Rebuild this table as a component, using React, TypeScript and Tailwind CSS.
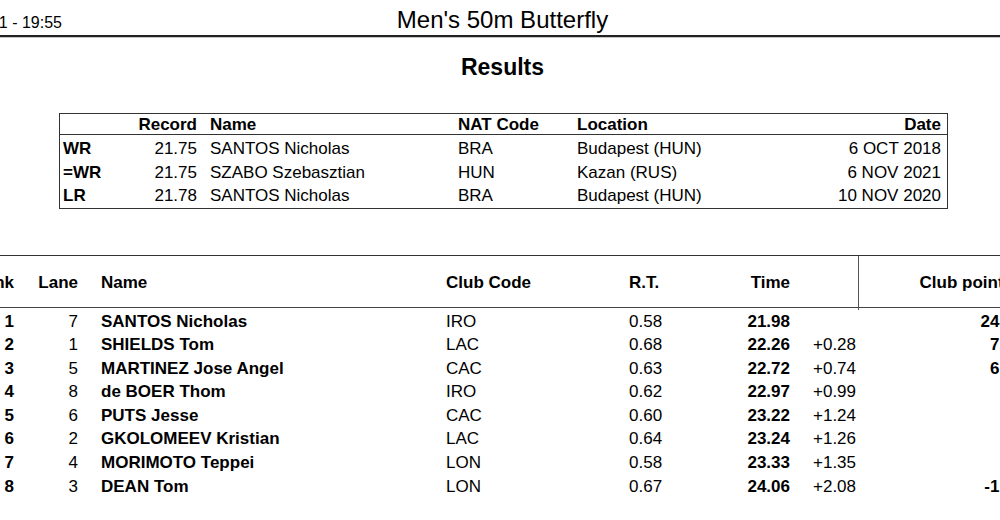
const records: string[][] = [
  ["WR", "21.75", "SANTOS Nicholas", "BRA", "Budapest (HUN)", "6 OCT 2018"],
  ["=WR", "21.75", "SZABO Szebasztian", "HUN", "Kazan (RUS)", "6 NOV 2021"],
  ["LR", "21.78", "SANTOS Nicholas", "BRA", "Budapest (HUN)", "10 NOV 2020"],
];

const results: string[][] = [
  ["1", "7", "SANTOS Nicholas", "IRO", "0.58", "21.98", "", "24.00"],
  ["2", "1", "SHIELDS Tom", "LAC", "0.68", "22.26", "+0.28", "7.00"],
  ["3", "5", "MARTINEZ Jose Angel", "CAC", "0.63", "22.72", "+0.74", "6.00"],
  ["4", "8", "de BOER Thom", "IRO", "0.62", "22.97", "+0.99", ""],
  ["5", "6", "PUTS Jesse", "CAC", "0.60", "23.22", "+1.24", ""],
  ["6", "2", "GKOLOMEEV Kristian", "LAC", "0.64", "23.24", "+1.26", ""],
  ["7", "4", "MORIMOTO Teppei", "LON", "0.58", "23.33", "+1.35", ""],
  ["8", "3", "DEAN Tom", "LON", "0.67", "24.06", "+2.08", "-1.00"],
];

export default function App() {
  return (
    <div className="w-[1000px] h-[520px] overflow-hidden bg-white text-black font-['Liberation_Sans',Arial,sans-serif]">
      <div className="ml-[-30px] w-[1065px]">
        {/* Header */}
        <div className="h-[37px] pt-[6px] border-b-2 border-[#222] grid grid-cols-[1fr_auto_1fr] items-baseline">
          <div className="w-[92px] flex justify-end whitespace-nowrap text-[16px] leading-[normal]">
            27 NOV 2021 - 19:55
          </div>
          <div className="text-[24px] leading-[normal] whitespace-nowrap">Men's 50m Butterfly</div>
          <div />
        </div>
        <div className="h-px bg-[#c4c4c4]" />

        <div className="mt-[16px] text-center text-[23px] font-bold leading-[normal]">Results</div>

        {/* Records table */}
        <div className="mt-[32px] ml-[89px] w-[889px] border border-[#333] text-[17px]">
          <div className="grid grid-cols-[74px_63px_261px_119px_1fr_auto] pr-[6px] h-[21px] leading-[21px] border-b border-[#333] font-bold whitespace-nowrap">
            <div className="pl-[3px]" />
            <div className="text-right">Record</div>
            <div className="pl-[13px]">Name</div>
            <div>NAT Code</div>
            <div>Location</div>
            <div className="text-right">Date</div>
          </div>
          <div className="pt-[2px]">
            {records.map((r) => (
              <div
                key={r[0]}
                className="grid grid-cols-[74px_63px_261px_119px_1fr_auto] pr-[6px] h-[23.5px] leading-[23.5px] whitespace-nowrap"
              >
                <div className="pl-[3px] font-bold">{r[0]}</div>
                <div className="text-right">{r[1]}</div>
                <div className="pl-[13px]">{r[2]}</div>
                <div>{r[3]}</div>
                <div>{r[4]}</div>
                <div className="text-right">{r[5]}</div>
              </div>
            ))}
          </div>
        </div>

        {/* Results table */}
        <div className="mt-[46px] border-t border-[#333] text-[17px]">
          <div className="grid grid-cols-[44px_64px_368px_183px_61px_100px_68px_1fr] h-[52px] leading-[54px] border-b border-[#444] font-bold whitespace-nowrap">
            <div className="flex justify-end">Rank</div>
            <div className="flex justify-end">Lane</div>
            <div className="pl-[23px]">Name</div>
            <div>Club Code</div>
            <div>R.T.</div>
            <div className="text-right">Time</div>
            <div />
            <div className="border-l border-[#555] text-right pr-[22px]">Club points</div>
          </div>
          <div className="pt-[2px]">
            {results.map((r) => (
              <div
                key={r[0]}
                className="grid grid-cols-[44px_64px_368px_183px_61px_100px_68px_1fr] h-[23.6px] leading-[23.6px] whitespace-nowrap"
              >
                <div className="text-right font-bold">{r[0]}</div>
                <div className="text-right">{r[1]}</div>
                <div className="pl-[23px] font-bold">{r[2]}</div>
                <div>{r[3]}</div>
                <div>{r[4]}</div>
                <div className="text-right font-bold">{r[5]}</div>
                <div className="pl-[23px]">{r[6]}</div>
                <div className="text-right pr-[12px] font-bold">{r[7]}</div>
              </div>
            ))}
          </div>
        </div>
      </div>
    </div>
  );
}
